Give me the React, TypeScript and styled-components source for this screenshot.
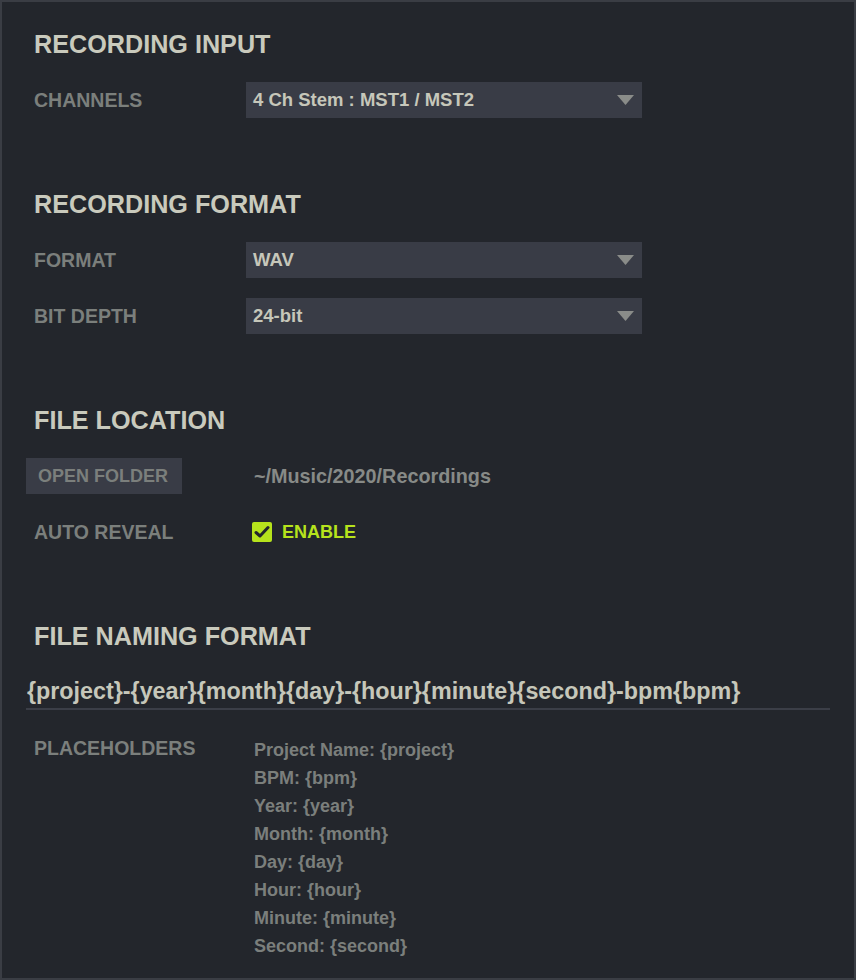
import React from "react";
import styled, { createGlobalStyle } from "styled-components";

const Global = createGlobalStyle`
  html, body { margin: 0; padding: 0; background: #23262c; }
  * { box-sizing: border-box; }
`;

const C = {
  bg: "#23262c",
  border: "#3a3d44",
  field: "#393c46",
  heading: "#c9cabd",
  label: "#7b7f7c",
  value: "#c6c7ba",
  muted: "#878a87",
  lime: "#b6e31c",
};

const Frame = styled.div`
  width: 856px;
  height: 980px;
  border: 2px solid ${C.border};
  background: ${C.bg};
  padding: 27px 24px 0 24px;
  display: flex;
  flex-direction: column;
  gap: 71px;
  font-family: "Liberation Sans", Arial, sans-serif;
  font-weight: 700;
`;

const Section = styled.section`
  display: flex;
  flex-direction: column;
  gap: 23px;
`;

const Heading = styled.h2`
  margin: 0;
  padding-left: 8px;
  font-size: 25.2px;
  line-height: 30px;
  color: ${C.heading};
  font-weight: 700;
`;

const Rows = styled.div`
  display: flex;
  flex-direction: column;
  gap: 20px;
`;

const Row = styled.div`
  display: grid;
  grid-template-columns: 220px 1fr;
  align-items: center;
  height: 36px;
`;

const Label = styled.div`
  padding-left: 8px;
  font-size: 19.5px;
  color: ${C.label};
`;

const SelectBox = styled.button`
  width: 396px;
  height: 36px;
  border: none;
  background: ${C.field};
  display: flex;
  align-items: center;
  justify-content: space-between;
  padding: 0 8px 0 7px;
  font-family: inherit;
  font-weight: 700;
  font-size: 18.5px;
  color: ${C.value};
  cursor: pointer;
`;

const Caret = styled.svg`
  width: 17px;
  height: 10px;
  fill: #8a8c89;
`;

const Select = ({ value }: { value: string }) => (
  <SelectBox type="button">
    <span>{value}</span>
    <Caret viewBox="0 0 17 10">
      <polygon points="0,0 17,0 8.5,10" />
    </Caret>
  </SelectBox>
);

const FolderButton = styled.button`
  width: 156px;
  height: 36px;
  border: none;
  background: ${C.field};
  padding: 0 0 0 12px;
  text-align: left;
  font-family: inherit;
  font-weight: 700;
  font-size: 18px;
  color: ${C.label};
  cursor: pointer;
`;

const PathText = styled.div`
  padding-left: 8px;
  font-size: 19.8px;
  color: ${C.muted};
`;

const CheckRow = styled.label`
  display: flex;
  align-items: center;
  gap: 10px;
  padding-left: 6px;
  color: ${C.lime};
  font-size: 18px;
`;

const CheckBox = styled.span`
  width: 20px;
  height: 20px;
  border-radius: 2px;
  background: ${C.lime};
  display: flex;
  align-items: center;
  justify-content: center;
`;

const NameInput = styled.div`
  height: 36px;
  border-bottom: 2px solid #3b3e47;
  padding-left: 1px;
  display: flex;
  align-items: center;
  font-size: 23.3px;
  color: ${C.value};
`;

const PlaceholderRow = styled.div`
  display: grid;
  grid-template-columns: 220px 1fr;
  margin-top: 1px;
`;

const TopLabel = styled(Label)`
  line-height: 28px;
`;

const List = styled.ul`
  margin: 0;
  padding: 2px 0 0 8px;
  list-style: none;
`;

const Item = styled.li`
  font-size: 18px;
  line-height: 28px;
  color: ${C.label};
`;

const placeholders = [
  "Project Name: {project}",
  "BPM: {bpm}",
  "Year: {year}",
  "Month: {month}",
  "Day: {day}",
  "Hour: {hour}",
  "Minute: {minute}",
  "Second: {second}",
];

export default function App() {
  return (
    <>
      <Global />
      <Frame>
        <Section>
          <Heading>RECORDING INPUT</Heading>
          <Rows>
            <Row>
              <Label>CHANNELS</Label>
              <Select value="4 Ch Stem : MST1 / MST2" />
            </Row>
          </Rows>
        </Section>

        <Section>
          <Heading>RECORDING FORMAT</Heading>
          <Rows>
            <Row>
              <Label>FORMAT</Label>
              <Select value="WAV" />
            </Row>
            <Row>
              <Label>BIT DEPTH</Label>
              <Select value="24-bit" />
            </Row>
          </Rows>
        </Section>

        <Section>
          <Heading>FILE LOCATION</Heading>
          <Rows>
            <Row>
              <div>
                <FolderButton type="button">OPEN FOLDER</FolderButton>
              </div>
              <PathText>~/Music/2020/Recordings</PathText>
            </Row>
            <Row>
              <Label>AUTO REVEAL</Label>
              <CheckRow>
                <CheckBox>
                  <svg width="16" height="14" viewBox="0 0 16 14">
                    <path
                      d="M2 7.5 L6 11 L14 2.5"
                      fill="none"
                      stroke="#23262c"
                      strokeWidth="3"
                      strokeLinecap="round"
                      strokeLinejoin="round"
                    />
                  </svg>
                </CheckBox>
                ENABLE
              </CheckRow>
            </Row>
          </Rows>
        </Section>

        <Section>
          <Heading>FILE NAMING FORMAT</Heading>
          <NameInput>{"{project}-{year}{month}{day}-{hour}{minute}{second}-bpm{bpm}"}</NameInput>
          <PlaceholderRow>
            <TopLabel>PLACEHOLDERS</TopLabel>
            <List>
              {placeholders.map((p) => (
                <Item key={p}>{p}</Item>
              ))}
            </List>
          </PlaceholderRow>
        </Section>
      </Frame>
    </>
  );
}
